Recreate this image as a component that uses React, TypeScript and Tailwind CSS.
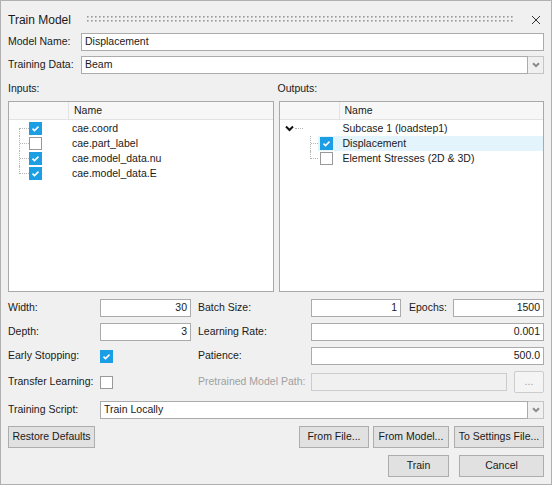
import React from 'react';

const font = "font-['Liberation_Sans',Arial,sans-serif]";

const Check = ({ checked }: { checked: boolean }) => (
  <div
    className={`w-[13px] h-[13px] shrink-0 flex items-center justify-center border ${
      checked ? 'bg-[#1c9ee5] border-[#1c9ee5]' : 'bg-white border-[#999999]'
    }`}
  >
    {checked && (
      <svg width="11" height="11" viewBox="0 0 11 11">
        <polyline points="2.5,5.6 4.5,7.6 8.5,3.6" fill="none" stroke="white" strokeWidth="1.5" />
      </svg>
    )}
  </div>
);

const DropArrow = () => (
  <div className="w-[16px] h-full shrink-0 flex items-center justify-center bg-[#f0f0f0] border-y border-r border-[#c4c4c4]">
    <svg width="8" height="6" viewBox="0 0 8 6">
      <polyline points="1,1.2 4,4.2 7,1.2" fill="none" stroke="#8a8a8a" strokeWidth="2" />
    </svg>
  </div>
);

const Field = ({ value, right, className = '' }: { value: string; right?: boolean; className?: string }) => (
  <div
    className={`h-[18px] bg-white border border-[#ababab] flex items-center px-[3px] ${
      right ? 'justify-end' : ''
    } ${className}`}
  >
    {value}
  </div>
);

const Combo = ({ value }: { value: string }) => (
  <div className="flex-1 h-[18px] flex">
    <div className="flex-1 bg-white border border-[#ababab] flex items-center px-[3px]">{value}</div>
    <DropArrow />
  </div>
);

const Btn = ({ label, className = '' }: { label: string; className?: string }) => (
  <div className={`h-[22px] bg-[#e1e1e1] border border-[#adadad] flex items-center justify-center ${className}`}>
    {label}
  </div>
);

// branch cell for a root level tree row
const Branch = ({ pos }: { pos: 'first' | 'mid' | 'last' }) => (
  <div className="relative w-[20px] h-full shrink-0">
    <div
      className={`absolute left-[10px] w-0 border-l border-dotted border-[#b4b4b4] ${
        pos === 'first' ? 'top-[7px] bottom-0' : pos === 'last' ? 'top-0 h-[8px]' : 'top-0 bottom-0'
      }`}
    />
    <div className="absolute left-[11px] top-[7px] w-[9px] h-0 border-t border-dotted border-[#b4b4b4]" />
  </div>
);

const inputs = [
  { name: 'cae.coord', on: true },
  { name: 'cae.part_label', on: false },
  { name: 'cae.model_data.nu', on: true },
  { name: 'cae.model_data.E', on: true },
];

const Header = () => (
  <div className="h-[18px] flex bg-[#f7f7f7] border-b border-[#e3e3e3]">
    <div className="w-[60px] border-r border-[#e3e3e3]" />
    <div className="pl-[5px] flex items-center">Name</div>
  </div>
);

const InputsTree = () => (
  <div className="h-[191px] bg-white border border-[#a9a9a9]">
    <Header />
    <div className="pt-[1px]">
      {inputs.map((it, i) => (
        <div key={it.name} className="h-[15px] flex items-center">
          <div className="w-[60px] h-full flex items-center">
            <Branch pos={i === 0 ? 'first' : i === inputs.length - 1 ? 'last' : 'mid'} />
            <Check checked={it.on} />
          </div>
          <div className="pl-[3px]">{it.name}</div>
        </div>
      ))}
    </div>
  </div>
);

const Child = ({ label, on, last, selected }: { label: string; on: boolean; last?: boolean; selected?: boolean }) => (
  <div className="h-[15px] flex">
    <div className="relative w-[38px] h-full shrink-0">
      <div
        className={`absolute left-[30px] w-0 border-l border-dotted border-[#b4b4b4] ${
          last ? 'top-0 h-[8px]' : 'top-0 bottom-0'
        }`}
      />
      <div className="absolute left-[31px] top-[7px] w-[7px] h-0 border-t border-dotted border-[#b4b4b4]" />
    </div>
    <div className={`flex-1 flex items-center ${selected ? 'bg-[#e3f4fc]' : ''}`}>
      <div className="w-[2px]" />
      <Check checked={on} />
      <div className="w-[7px]" />
      <div className="pl-[3px]">{label}</div>
    </div>
  </div>
);

const OutputsTree = () => (
  <div className="h-[191px] bg-white border border-[#a9a9a9]">
    <Header />
    <div className="pt-[1px]">
      <div className="h-[15px] flex items-center">
        <div className="w-[60px] h-full flex items-center">
          <div className="w-[5px]" />
          <svg width="9" height="7" viewBox="0 0 9 7" className="shrink-0 -mt-[1px]">
            <polyline points="1,1.5 4.5,5 8,1.5" fill="none" stroke="#111" strokeWidth="2" />
          </svg>
          <div className="ml-[1px] w-[8px] h-0 border-t border-dotted border-[#b4b4b4]" />
        </div>
        <div className="pl-[3px]">Subcase 1 (loadstep1)</div>
      </div>
      <Child label="Displacement" on selected />
      <Child label="Element Stresses (2D & 3D)" on={false} last />
    </div>
  </div>
);

const Grip = () => (
  <svg className="flex-1 h-[8px] mx-[16px]" height="8">
    <defs>
      <pattern id="g" width="4" height="4" patternUnits="userSpaceOnUse">
        <rect x="0" y="0" width="1.6" height="1.6" fill="#999999" />
      </pattern>
    </defs>
    <rect x="0" y="0" width="100%" height="6" fill="url(#g)" />
  </svg>
);

export default function App() {
  return (
    <div className={`${font} text-[10.5px] text-[#1a1a1a] w-[552px] h-[485px] bg-[#f0f0f0] border border-[#b0b0b0] px-[7px] pt-[9px] pb-[6px] flex flex-col`}>
      {/* title bar */}
      <div className="h-[20px] flex items-center">
        <div className="text-[12px]">Train Model</div>
        <Grip />
        <svg width="10" height="10" viewBox="0 0 10 10" className="mr-[3px]">
          <path d="M1 1 L9 9 M9 1 L1 9" stroke="#333" strokeWidth="1" />
        </svg>
      </div>

      <div className="mt-[3px] flex items-center h-[18px]">
        <div className="w-[73px]">Model Name:</div>
        <Field value="Displacement" className="flex-1" />
      </div>
      <div className="mt-[5px] flex items-center h-[18px]">
        <div className="w-[73px]">Training Data:</div>
        <Combo value="Beam" />
      </div>

      <div className="mt-[8px] grid grid-cols-2 gap-x-[5px]">
        <div className="h-[14px] flex items-center">Inputs:</div>
        <div className="h-[14px] flex items-center -ml-[1px]">Outputs:</div>
        <div className="mt-[5px]">
          <InputsTree />
        </div>
        <div className="mt-[5px]">
          <OutputsTree />
        </div>
      </div>

      <div className="mt-[7px] flex items-center h-[18px]">
        <div className="w-[92px]">Width:</div>
        <Field value="30" right className="w-[91px]" />
        <div className="w-[120px] pl-[7px]">Batch Size:</div>
        <Field value="1" right className="w-[90px]" />
        <div className="w-[52px] pl-[8px]">Epochs:</div>
        <Field value="1500" right className="flex-1" />
      </div>
      <div className="mt-[6px] flex items-center h-[18px]">
        <div className="w-[92px]">Depth:</div>
        <Field value="3" right className="w-[91px]" />
        <div className="w-[120px] pl-[7px]">Learning Rate:</div>
        <Field value="0.001" right className="flex-1" />
      </div>
      <div className="mt-[6px] flex items-center h-[18px]">
        <div className="w-[92px]">Early Stopping:</div>
        <div className="w-[91px] flex items-center">
          <Check checked />
        </div>
        <div className="w-[120px] pl-[7px]">Patience:</div>
        <Field value="500.0" right className="flex-1" />
      </div>
      <div className="mt-[6px] flex items-center h-[22px]">
        <div className="w-[92px]">Transfer Learning:</div>
        <div className="w-[91px] flex items-center">
          <Check checked={false} />
        </div>
        <div className="w-[120px] pl-[7px] text-[#a0a0a0] whitespace-nowrap">Pretrained Model Path:</div>
        <div className="w-[196px] h-[18px] bg-[#f0f0f0] border border-[#cccccc]" />
        <div className="ml-auto w-[30px] h-[22px] bg-[#f4f4f4] border border-[#cccccc] rounded-[2px] flex items-center justify-center text-[#a0a0a0]">
          ...
        </div>
      </div>
      <div className="mt-[8px] flex items-center h-[18px]">
        <div className="w-[92px]">Training Script:</div>
        <Combo value="Train Locally" />
      </div>

      <div className="mt-[7px] flex items-center">
        <Btn label="Restore Defaults" className="w-[87px]" />
        <Btn label="From File..." className="ml-auto w-[70px]" />
        <Btn label="From Model..." className="ml-[4px] w-[76px]" />
        <Btn label="To Settings File..." className="ml-[5px] w-[90px]" />
      </div>
      <div className="mt-[7px] flex items-center justify-end">
        <Btn label="Train" className="w-[61px]" />
        <Btn label="Cancel" className="ml-[10px] w-[85px]" />
      </div>
    </div>
  );
}
